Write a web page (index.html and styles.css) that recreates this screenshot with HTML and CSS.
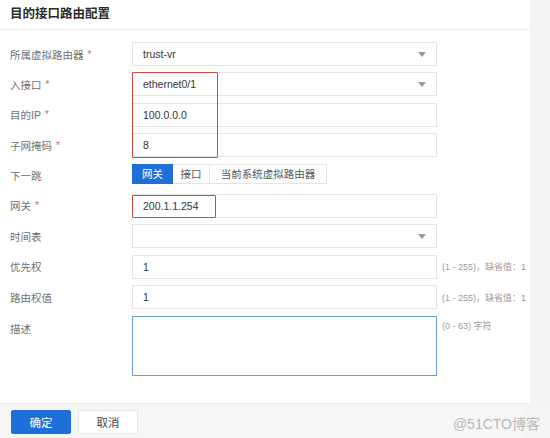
FILE: index.html
```html
<!DOCTYPE html>
<html lang="zh">
<head>
<meta charset="utf-8">
<title>目的接口路由配置</title>
<link rel="stylesheet" href="styles.css">
</head>
<body>
<div class="page">
  <div class="main">
    <div class="panel">
      <div class="header">目的接口路由配置</div>
      <div class="form">
        <div class="label">所属虚拟路由器<span class="req">*</span></div>
        <div class="control select"><span>trust-vr</span><i class="caret"></i></div>
        <div class="hint"></div>

        <div class="label">入接口<span class="req">*</span></div>
        <div class="control select"><span>ethernet0/1</span><i class="caret"></i></div>
        <div class="hint"></div>

        <div class="label">目的IP<span class="req">*</span></div>
        <div class="control"><span>100.0.0.0</span></div>
        <div class="hint"></div>

        <div class="label">子网掩码<span class="req">*</span></div>
        <div class="control"><span>8</span></div>
        <div class="hint"></div>

        <div class="label">下一跳</div>
        <div class="btn-group">
          <span class="seg seg-a active">网关</span>
          <span class="seg seg-b">接口</span>
          <span class="seg seg-c">当前系统虚拟路由器</span>
        </div>
        <div class="hint"></div>

        <div class="label">网关<span class="req">*</span></div>
        <div class="control"><span>200.1.1.254</span></div>
        <div class="hint"></div>

        <div class="label">时间表</div>
        <div class="control select"><span></span><i class="caret"></i></div>
        <div class="hint"></div>

        <div class="label">优先权</div>
        <div class="control"><span>1</span></div>
        <div class="hint">(1 - 255)，缺省值：1</div>

        <div class="label">路由权值</div>
        <div class="control"><span>1</span></div>
        <div class="hint">(1 - 255)，缺省值：1</div>

        <div class="label label-top">描述</div>
        <div class="control textarea"></div>
        <div class="hint hint-top">(0 - 63) 字符</div>

        <div class="mark mark-1"></div>
        <div class="mark mark-2"></div>
      </div>
    </div>
    <div class="side"></div>
  </div>
  <div class="footer">
    <span class="btn btn-primary">确定</span>
    <span class="btn">取消</span>
    <span class="watermark">@51CTO博客</span>
  </div>
</div>
</body>
</html>
```
FILE: styles.css
```css
* { box-sizing: border-box; }
html, body {
  margin: 0;
  padding: 0;
  width: 550px;
  height: 438px;
  overflow: hidden;
  background: #f4f4f4;
  font-family: "Liberation Sans", "Noto Sans CJK SC", sans-serif;
  color: #333;
}
.page {
  display: flex;
  flex-direction: column;
  width: 550px;
  height: 438px;
}
.main {
  display: flex;
  height: 403px;
}
.panel {
  width: 530px;
  background: #fff;
}
.side {
  flex: 1;
  background: #f3f3f3;
}
.header {
  height: 30px;
  padding-left: 10px;
  border-bottom: 1px solid #ededed;
  font-size: 12.5px;
  font-weight: bold;
  line-height: 29px;
  color: #2b2b2b;
}
.form {
  position: relative;
  display: grid;
  grid-template-columns: 122px 305px 1fr;
  grid-auto-rows: 24px;
  row-gap: 6.4px;
  column-gap: 0;
  padding: 12px 0 0 10px;
}
.form > .textarea { height: 60px; }
.label {
  font-size: 10.5px;
  color: #707070;
  display: flex;
  align-items: center;
  white-space: nowrap;
}
.label-top { align-items: flex-start; padding-top: 5px; }
.req {
  color: #e05a5a;
  margin-left: 4px;
  font-size: 10px;
}
.control {
  border: 1px solid #e4e4e4;
  background: #fff;
  display: flex;
  align-items: center;
  padding: 0 10px;
  font-size: 10.5px;
  color: #333;
  position: relative;
}
.control span { flex: 1; }
.select .caret {
  width: 0;
  height: 0;
  border-left: 4px solid transparent;
  border-right: 4px solid transparent;
  border-top: 5px solid #9a9a9a;
}
.textarea {
  border: 1px solid #6d9bd3;
}
.hint {
  font-size: 9px;
  color: #9a9a9a;
  display: flex;
  align-items: center;
  padding-left: 5px;
  white-space: nowrap;
}
.hint-top { align-items: flex-start; padding-top: 3px; }
.btn-group {
  display: flex;
  height: 20px;
  align-self: start;
}
.seg {
  display: flex;
  align-items: center;
  justify-content: center;
  height: 20px;
  font-size: 10.5px;
  color: #555;
  border: 1px solid #e4e4e4;
  border-left: none;
  background: #fff;
}
.seg-a { width: 41px; border-left: 1px solid #e4e4e4; }
.seg-b { width: 37px; }
.seg-c { width: 117px; }
.seg.active {
  background: #1f6fd8;
  border-color: #1f6fd8;
  color: #fff;
}
.mark {
  position: absolute;
  border: 1.5px solid #d4473f;
  border-radius: 1px;
  pointer-events: none;
}
.mark-1 { left: 132px; top: 42px; width: 86px; height: 86px; }
.mark-2 { left: 132px; top: 165px; width: 84px; height: 23px; }
.footer {
  position: relative;
  flex: 1;
  display: flex;
  align-items: center;
  gap: 7px;
  padding-left: 11px;
  padding-top: 2px;
  background: #f6f6f6;
  border-top: 1px solid #e8e8e8;
  margin-right: 25px;
  box-shadow: 25px 0 0 #f4f4f4;
}
.btn {
  width: 60px;
  height: 24px;
  display: flex;
  align-items: center;
  justify-content: center;
  font-size: 11.5px;
  color: #444;
  background: #fff;
  border: 1px solid #e6e6e6;
  border-radius: 2px;
}
.btn-primary {
  background: #1f6fd8;
  border-color: #1f6fd8;
  color: #fff;
}
.watermark {
  position: absolute;
  right: -15px;
  top: 9px;
  font-size: 14px;
  color: #b9b9b9;
}
```
